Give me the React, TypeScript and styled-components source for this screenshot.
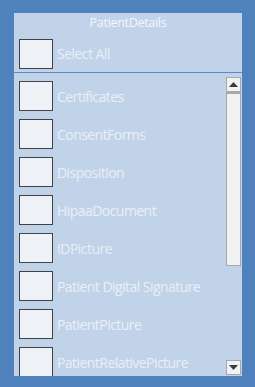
import React from "react";
import styled, { createGlobalStyle } from "styled-components";

const GlobalStyle = createGlobalStyle`
  html, body {
    margin: 0;
    padding: 0;
    background: #4f81bd;
    font-family: "Open Sans", "Liberation Sans", sans-serif;
  }
`;

const items = [
  "Certificates",
  "ConsentForms",
  "Disposition",
  "HipaaDocument",
  "IDPicture",
  "Patient Digital Signature",
  "PatientPicture",
  "PatientRelativePicture",
];

const App = () => {
  return (
    <>
      <GlobalStyle />
      <Page>
        <Panel>
          <Header>PatientDetails</Header>
          <SelectRow>
            <Check />
            <Label>Select All</Label>
          </SelectRow>
          <Divider />
          <ListArea>
            <Items>
              {items.map((name) => (
                <Row key={name}>
                  <Check />
                  <Label>{name}</Label>
                </Row>
              ))}
            </Items>
            <ScrollBar>
              <ArrowButton>
                <svg width="9" height="5" viewBox="0 0 9 5">
                  <path d="M0 5 L4.5 0 L9 5 Z" fill="#3a3a3a" />
                </svg>
              </ArrowButton>
              <Thumb />
              <Track />
              <ArrowButton>
                <svg width="9" height="5" viewBox="0 0 9 5">
                  <path d="M0 0 L4.5 5 L9 0 Z" fill="#3a3a3a" />
                </svg>
              </ArrowButton>
            </ScrollBar>
          </ListArea>
        </Panel>
      </Page>
    </>
  );
};

export default App;

const Page = styled.div`
  width: 255px;
  height: 387px;
  padding: 13px 13px 11px 14px;
  box-sizing: border-box;
`;

const Panel = styled.div`
  background: #c1d3e8;
  width: 228px;
  height: 363px;
  display: flex;
  flex-direction: column;
  overflow: hidden;
`;

const Header = styled.div`
  height: 21px;
  line-height: 20px;
  text-align: center;
  color: #f4f7fb;
  font-size: 12.5px;
  letter-spacing: -0.3px;
`;

const SelectRow = styled.div`
  display: flex;
  align-items: center;
  gap: 4px;
  padding: 2px 5px 0;
  height: 37px;
  box-sizing: border-box;
`;

const Divider = styled.div`
  height: 1px;
  background: #5a89c4;
  margin-top: 1px;
`;

const ListArea = styled.div`
  flex: 1;
  display: flex;
  min-height: 0;
`;

const Items = styled.div`
  flex: 1;
  display: flex;
  flex-direction: column;
  gap: 8px;
  padding: 8px 5px 0;
  overflow: hidden;
`;

const Row = styled.div`
  display: flex;
  align-items: center;
  gap: 4px;
  flex-shrink: 0;
`;

const Check = styled.div`
  width: 34px;
  height: 30px;
  box-sizing: border-box;
  border: 1px solid #3f4247;
  background: #eef2f7;
  flex-shrink: 0;
`;

const Label = styled.span`
  color: #e9eff7;
  font-size: 14px;
  letter-spacing: -0.55px;
  white-space: nowrap;
`;

const ScrollBar = styled.div`
  width: 15px;
  margin: 4px 1px 1px 0;
  display: flex;
  flex-direction: column;
`;

const ArrowButton = styled.div`
  height: 15px;
  box-sizing: border-box;
  border: 1px solid #a8a8a8;
  background: #f2f2f2;
  display: flex;
  align-items: center;
  justify-content: center;
`;

const Thumb = styled.div`
  height: 174px;
  box-sizing: border-box;
  border: 1px solid #a8a8a8;
  border-top-width: 2px;
  background: #f2f2f2;
`;

const Track = styled.div`
  flex: 1;
`;
